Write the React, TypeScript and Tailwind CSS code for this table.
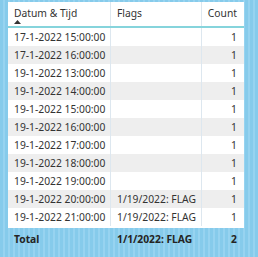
import React from "react";

const rows: [string, string, string][] = [
  ["17-1-2022 15:00:00", "", "1"],
  ["17-1-2022 16:00:00", "", "1"],
  ["19-1-2022 13:00:00", "", "1"],
  ["19-1-2022 14:00:00", "", "1"],
  ["19-1-2022 15:00:00", "", "1"],
  ["19-1-2022 16:00:00", "", "1"],
  ["19-1-2022 17:00:00", "", "1"],
  ["19-1-2022 18:00:00", "", "1"],
  ["19-1-2022 19:00:00", "", "1"],
  ["19-1-2022 20:00:00", "1/19/2022: FLAG", "1"],
  ["19-1-2022 21:00:00", "1/19/2022: FLAG", "1"],
];

export default function App() {
  return (
    <div
      className="w-[258px] h-[257px] overflow-hidden bg-[repeating-linear-gradient(90deg,#86cbeb_0px,#86cbeb_3px,#97d3f0_3px,#97d3f0_5px)] pt-[2px] pl-[8px] text-[10.3px] text-[#333333]"
      style={{ fontFamily: '"Noto Sans", "Open Sans", sans-serif' }}
    >
      <div className="w-[236px]">
        <div className="bg-white">
          {/* header */}
          <div className="grid grid-cols-[103px_91px_42px] h-[26px] border-b-2 border-[#86d4dc]">
            <div className="relative border-r border-[#dde7ef] pl-[6px] pt-[4px] leading-[14px]">
              Datum &amp; Tijd
              <svg
                className="absolute left-[6px] top-[18px]"
                width="7"
                height="4"
                viewBox="0 0 7 4"
              >
                <polygon points="0,4 3.5,0 7,4" fill="#333333" />
              </svg>
            </div>
            <div className="border-r border-[#dde7ef] pl-[6px] pt-[4px] leading-[14px]">
              Flags
            </div>
            <div className="pr-[7px] pt-[4px] leading-[14px] text-right">Count</div>
          </div>
          {/* rows */}
          {rows.map((r, i) => (
            <div
              key={i}
              className={`grid grid-cols-[103px_91px_42px] h-[18px] leading-[18px] ${
                i % 2 === 1 ? "bg-[#eeeeee]" : "bg-white"
              }`}
            >
              <div className="border-r border-[#dde7ef] pl-[6px] whitespace-nowrap">{r[0]}</div>
              <div className="border-r border-[#dde7ef] pl-[6px] whitespace-nowrap">{r[1]}</div>
              <div className="pr-[7px] text-right">{r[2]}</div>
            </div>
          ))}
          <div className="h-[2px] bg-white" />
        </div>
        {/* total */}
        <div className="grid grid-cols-[103px_91px_42px] h-[22px] leading-[22px] font-bold text-[#252423]">
          <div className="pl-[6px]">Total</div>
          <div className="pl-[6px] whitespace-nowrap">1/1/2022: FLAG</div>
          <div className="pr-[7px] text-right">2</div>
        </div>
      </div>
    </div>
  );
}
